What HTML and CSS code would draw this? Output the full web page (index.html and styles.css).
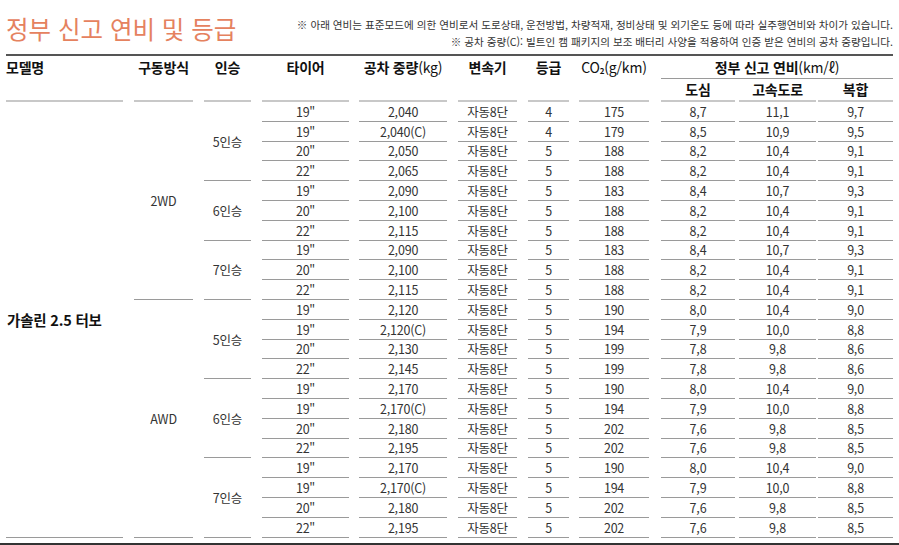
FILE: index.html
```html
<!DOCTYPE html>
<html lang="ko">
<head>
<meta charset="utf-8">
<title>정부 신고 연비 및 등급</title>
<link rel="stylesheet" href="styles.css">
</head>
<body>
<div class="head">
  <h1 class="title">정부 신고 연비 및 등급</h1>
  <div class="notes">
    <p>※ 아래 연비는 표준모드에 의한 연비로서 도로상태, 운전방법, 차량적재, 정비상태 및 외기온도 등에 따라 실주행연비와 차이가 있습니다.</p>
    <p>※ 공차 중량(C): 빌트인 캠 패키지의 보조 배터리 사양을 적용하여 인증 받은 연비의 공차 중량입니다.</p>
  </div>
</div>
<div class="rule"></div>
<table class="spec">
  <colgroup>
    <col class="w-m"><col class="w-d"><col class="w-s"><col class="w-t"><col class="w-w"><col class="w-g"><col class="w-r"><col class="w-co"><col class="w-city"><col class="w-hwy"><col class="w-comb">
  </colgroup>
  <thead>
    <tr class="h1">
      <th class="m left" rowspan="2">모델명</th>
      <th class="d" rowspan="2">구동방식</th>
      <th class="s" rowspan="2">인승</th>
      <th class="t" rowspan="2">타이어</th>
      <th class="w" rowspan="2">공차 중량<span class="unit">(kg)</span></th>
      <th class="g" rowspan="2">변속기</th>
      <th class="r" rowspan="2">등급</th>
      <th class="co" rowspan="2"><span class="unit">CO<sub>2</sub>(g/km)</span></th>
      <th class="fe" colspan="3">정부 신고 연비<span class="unit">(km/ℓ)</span></th>
    </tr>
    <tr class="h2">
      <th class="city">도심</th>
      <th class="hwy">고속도로</th>
      <th class="comb">복합</th>
    </tr>
  </thead>
  <tbody>
    <tr><td class="m model" rowspan="22">가솔린 2.5 터보</td><td class="d" rowspan="10">2WD</td><td class="s" rowspan="4">5인승</td><td class="t">19"</td><td class="w">2,040</td><td class="g">자동8단</td><td class="r">4</td><td class="co">175</td><td class="city">8,7</td><td class="hwy">11,1</td><td class="comb">9,7</td></tr>
    <tr><td class="t">19"</td><td class="w">2,040(C)</td><td class="g">자동8단</td><td class="r">4</td><td class="co">179</td><td class="city">8,5</td><td class="hwy">10,9</td><td class="comb">9,5</td></tr>
    <tr><td class="t">20"</td><td class="w">2,050</td><td class="g">자동8단</td><td class="r">5</td><td class="co">188</td><td class="city">8,2</td><td class="hwy">10,4</td><td class="comb">9,1</td></tr>
    <tr><td class="t">22"</td><td class="w">2,065</td><td class="g">자동8단</td><td class="r">5</td><td class="co">188</td><td class="city">8,2</td><td class="hwy">10,4</td><td class="comb">9,1</td></tr>
    <tr><td class="s" rowspan="3">6인승</td><td class="t">19"</td><td class="w">2,090</td><td class="g">자동8단</td><td class="r">5</td><td class="co">183</td><td class="city">8,4</td><td class="hwy">10,7</td><td class="comb">9,3</td></tr>
    <tr><td class="t">20"</td><td class="w">2,100</td><td class="g">자동8단</td><td class="r">5</td><td class="co">188</td><td class="city">8,2</td><td class="hwy">10,4</td><td class="comb">9,1</td></tr>
    <tr><td class="t">22"</td><td class="w">2,115</td><td class="g">자동8단</td><td class="r">5</td><td class="co">188</td><td class="city">8,2</td><td class="hwy">10,4</td><td class="comb">9,1</td></tr>
    <tr><td class="s" rowspan="3">7인승</td><td class="t">19"</td><td class="w">2,090</td><td class="g">자동8단</td><td class="r">5</td><td class="co">183</td><td class="city">8,4</td><td class="hwy">10,7</td><td class="comb">9,3</td></tr>
    <tr><td class="t">20"</td><td class="w">2,100</td><td class="g">자동8단</td><td class="r">5</td><td class="co">188</td><td class="city">8,2</td><td class="hwy">10,4</td><td class="comb">9,1</td></tr>
    <tr><td class="t">22"</td><td class="w">2,115</td><td class="g">자동8단</td><td class="r">5</td><td class="co">188</td><td class="city">8,2</td><td class="hwy">10,4</td><td class="comb">9,1</td></tr>
    <tr><td class="d" rowspan="12">AWD</td><td class="s" rowspan="4">5인승</td><td class="t">19"</td><td class="w">2,120</td><td class="g">자동8단</td><td class="r">5</td><td class="co">190</td><td class="city">8,0</td><td class="hwy">10,4</td><td class="comb">9,0</td></tr>
    <tr><td class="t">19"</td><td class="w">2,120(C)</td><td class="g">자동8단</td><td class="r">5</td><td class="co">194</td><td class="city">7,9</td><td class="hwy">10,0</td><td class="comb">8,8</td></tr>
    <tr><td class="t">20"</td><td class="w">2,130</td><td class="g">자동8단</td><td class="r">5</td><td class="co">199</td><td class="city">7,8</td><td class="hwy">9,8</td><td class="comb">8,6</td></tr>
    <tr><td class="t">22"</td><td class="w">2,145</td><td class="g">자동8단</td><td class="r">5</td><td class="co">199</td><td class="city">7,8</td><td class="hwy">9,8</td><td class="comb">8,6</td></tr>
    <tr><td class="s" rowspan="4">6인승</td><td class="t">19"</td><td class="w">2,170</td><td class="g">자동8단</td><td class="r">5</td><td class="co">190</td><td class="city">8,0</td><td class="hwy">10,4</td><td class="comb">9,0</td></tr>
    <tr><td class="t">19"</td><td class="w">2,170(C)</td><td class="g">자동8단</td><td class="r">5</td><td class="co">194</td><td class="city">7,9</td><td class="hwy">10,0</td><td class="comb">8,8</td></tr>
    <tr><td class="t">20"</td><td class="w">2,180</td><td class="g">자동8단</td><td class="r">5</td><td class="co">202</td><td class="city">7,6</td><td class="hwy">9,8</td><td class="comb">8,5</td></tr>
    <tr><td class="t">22"</td><td class="w">2,195</td><td class="g">자동8단</td><td class="r">5</td><td class="co">202</td><td class="city">7,6</td><td class="hwy">9,8</td><td class="comb">8,5</td></tr>
    <tr><td class="s" rowspan="4">7인승</td><td class="t">19"</td><td class="w">2,170</td><td class="g">자동8단</td><td class="r">5</td><td class="co">190</td><td class="city">8,0</td><td class="hwy">10,4</td><td class="comb">9,0</td></tr>
    <tr><td class="t">19"</td><td class="w">2,170(C)</td><td class="g">자동8단</td><td class="r">5</td><td class="co">194</td><td class="city">7,9</td><td class="hwy">10,0</td><td class="comb">8,8</td></tr>
    <tr><td class="t">20"</td><td class="w">2,180</td><td class="g">자동8단</td><td class="r">5</td><td class="co">202</td><td class="city">7,6</td><td class="hwy">9,8</td><td class="comb">8,5</td></tr>
    <tr><td class="t">22"</td><td class="w">2,195</td><td class="g">자동8단</td><td class="r">5</td><td class="co">202</td><td class="city">7,6</td><td class="hwy">9,8</td><td class="comb">8,5</td></tr>
  </tbody>
</table>
<div class="endrule"></div>
</body>
</html>
```
FILE: styles.css
```css
* { box-sizing: border-box; }
html, body { margin: 0; padding: 0; background: #fff; }
body {
  font-family: "Noto Sans CJK KR", "Noto Sans", sans-serif;
  color: #333;
  width: 899px;
  height: 545px;
  overflow: hidden;
}
.head {
  display: flex;
  justify-content: space-between;
  align-items: flex-start;
  height: 54px;
  padding: 0 6px;
}
.title {
  margin: 13px 0 0 0;
  font-size: 24.5px;
  line-height: 32px;
  font-weight: 400;
  color: #e5825f;
  letter-spacing: 0;
  white-space: nowrap;
}
.notes {
  padding-top: 16px;
  text-align: right;
  font-size: 10.6px;
  line-height: 17px;
  color: #333;
  letter-spacing: 0;
  white-space: nowrap;
}
.notes p { margin: 0; }
.rule {
  margin: 0 6px;
  border-top: 2px solid #555;
}
.spec {
  border-collapse: separate;
  border-spacing: 0;
  table-layout: fixed;
  width: 893px;
}
.w-m { width: 123px; }
.w-d { width: 70px; }
.w-s { width: 58px; }
.w-t { width: 98px; }
.w-w { width: 98px; }
.w-g { width: 70px; }
.w-r { width: 52px; }
.w-co { width: 80px; }
.w-city { width: 86px; }
.w-hwy { width: 81px; }
.w-comb { width: 77px; }

.spec th, .spec td {
  --gap: 10px;
  --line: #9a9a9a;
  --lw: 1px;
  padding: 0 0 0 var(--gap);
  text-align: center;
  background-image: linear-gradient(var(--line), var(--line));
  background-repeat: no-repeat;
  background-position: right bottom;
  background-size: calc(100% - var(--gap)) var(--lw);
}
.m { --gap: 6px !important; }
.d, .s, .t, .g, .r { --gap: 11px !important; }
.w, .co { --gap: 10px !important; }
.city, .fe { --gap: 12px !important; }
.hwy { --gap: 4px !important; }
.comb { --gap: 2px !important; }

.spec th {
  font-size: 14px;
  font-weight: 700;
  color: #111;
  letter-spacing: -0.2px;
}
.spec th .unit { font-weight: 400; }
.spec th sub { font-size: 8px; vertical-align: -1px; font-weight: 700; }
.h1 th {
  height: 23px;
  line-height: 23px;
  vertical-align: top;
  --line: #c8c8c8;
  --lw: 2px;
}
.h1 th.fe { --line: #9a9a9a; --lw: 1px; }
.h2 th {
  height: 23px;
  line-height: 21px;
  vertical-align: top;
  --line: #c8c8c8;
  --lw: 2px;
}
.spec th.left, .spec td.model { text-align: left; }
.spec td {
  height: 19.8px;
  font-size: 12.5px;
  line-height: 16px;
  vertical-align: middle;
  color: #333;
  letter-spacing: -0.2px;
}
.spec td.model {
  font-size: 14.5px;
  font-weight: 700;
  color: #111;
  padding-left: 7px;
}
.endrule {
  margin-top: 5px;
  border-top: 2px solid #333;
}
```
